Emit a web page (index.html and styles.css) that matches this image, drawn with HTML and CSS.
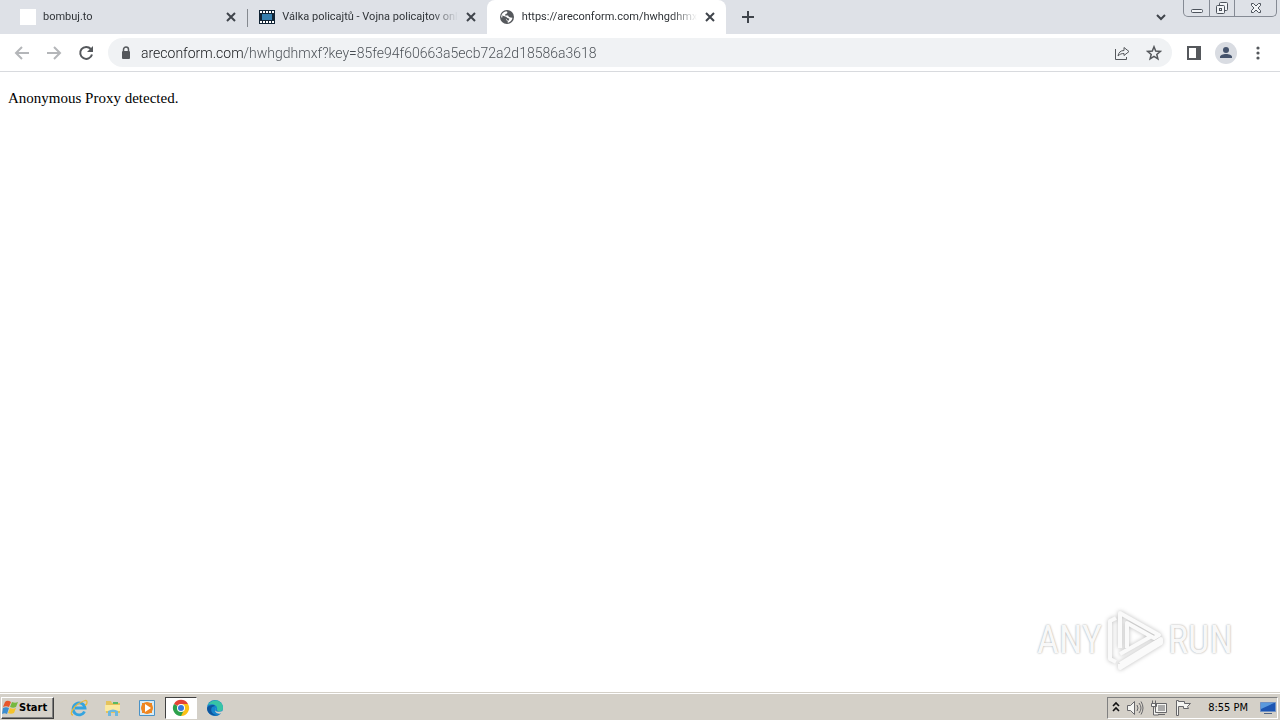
FILE: index.html
```html
<!DOCTYPE html>
<html lang="en">
<head>
<meta charset="utf-8">
<title>areconform.com</title>
<link rel="stylesheet" href="styles.css">
</head>
<body>
<header class="tabstrip">
  <div class="tabs" role="tablist">
    <div class="tab">
      <span class="favicon blank"></span>
      <button class="title" role="tab">bombuj.to</button>
      <button class="close" aria-label="Close tab"><svg width="10" height="10"><path d="M1 1l8 8M9 1l-8 8"/></svg></button>
    </div>
    <div class="tab divided">
      <svg class="favicon" viewBox="0 0 16 16"><path fill="#102334" d="M0 1h16v14H0z"/><path fill="#367fae" d="M3 5h10v6H3z"/><path stroke="#fff" stroke-width="2" stroke-dasharray="2 1" d="M1 3h14M1 13h14"/></svg>
      <button class="title" role="tab">Válka policajtů - Vojna policajtov onli</button>
      <button class="close" aria-label="Close tab"><svg width="10" height="10"><path d="M1 1l8 8M9 1l-8 8"/></svg></button>
    </div>
    <div class="tab active">
      <svg class="favicon" viewBox="0 0 16 16"><circle cx="8" cy="8" r="7" fill="#55585c"/><path fill="#fff" d="M2.200 8.500C2 5.300 4 3 7.200 2.300L8.500 3 8 4.500 6.500 5 6 6.500h3l1 1.500 1.500.5 2 .3c-.4 2.800-2.400 4.700-4.800 4.900V12l-1.500-1V9.500L4.500 8z"/><path fill="#55585c" d="M3.200 6.500l3.800 1.200L8.500 9l2 .8-1.300 2.200L7 9.800 3.500 8.500z"/></svg>
      <button class="title" role="tab" aria-selected="true">https://areconform.com/hwhgdhmxf</button>
      <button class="close" aria-label="Close tab"><svg width="10" height="10"><path d="M1 1l8 8M9 1l-8 8"/></svg></button>
    </div>
  </div>
  <button class="newtab" aria-label="New tab"><svg width="12" height="12"><path d="M6 0v12M0 6h12"/></svg></button>
  <button class="search-tabs" aria-label="Search tabs"><svg width="10" height="7"><path d="M1 1l4 4 4-4"/></svg></button>
  <div class="window-buttons">
    <button aria-label="Minimize"><svg width="14" height="14"><rect x="1.500" y="8.500" width="11" height="3" rx="1"/></svg></button>
    <button aria-label="Restore"><svg width="14" height="14"><rect x="4.500" y="1.500" width="8" height="8" rx="1"/><rect x="1.500" y="4.500" width="8" height="8" rx="1"/><rect x="4.500" y="7.500" width="2" height="2"/></svg></button>
    <button class="exit" aria-label="Close"><svg width="14" height="14"><path d="M2.500 2.500h2L7 5l2.500-2.500h2v2L9 7l2.500 2.500v2h-2L7 9l-2.500 2.500h-2v-2L5 7 2.500 4.500z"/></svg></button>
  </div>
</header>

<nav class="toolbar">
  <button class="tool faded" aria-label="Back"><svg viewBox="0 0 16 16"><path d="M15 8H2M8 2L2 8l6 6"/></svg></button>
  <button class="tool faded" aria-label="Forward"><svg viewBox="0 0 16 16"><path d="M1 8h13M8 2l6 6-6 6"/></svg></button>
  <button class="tool" aria-label="Reload"><svg viewBox="0 0 16 16"><path d="M12.800 4A6 6 0 1 0 14 9.500"/><path class="solid" d="M15 1v6H9z"/></svg></button>
  <div class="omnibox">
    <button class="lock" aria-label="Site information"><svg width="10" height="14"><rect x="1" y="5" width="8" height="8" rx="1" fill="#55585c"/><path d="M2.500 5V3.500a2.500 2.500 0 0 1 5 0V5" fill="none" stroke="#55585c" stroke-width="1.500"/></svg></button>
    <input class="url" type="text" aria-label="Address" value="areconform.com/hwhgdhmxf?key=85fe94f60663a5ecb72a2d18586a3618">
    <button class="tool thin" aria-label="Share"><svg viewBox="0 0 16 16"><path d="M1.500 4v10.500h11V12M4 11c.5-3.500 2.500-5.500 6-5.500V2.500L15 6.500l-5 4V8.500C7.500 8.500 6 9 4 11z"/></svg></button>
    <button class="tool star" aria-label="Bookmark"><svg viewBox="0 0 16 16"><path d="M8 1.800l1.700 4.300 4.600.3-3.500 3 1.100 4.400L8 11.400l-3.900 2.400 1.100-4.400-3.500-3 4.600-.3z"/></svg></button>
  </div>
  <button class="tool" aria-label="Side panel"><svg viewBox="0 0 16 16"><path class="solid" fill-rule="evenodd" d="M1 1h14v14H1zM3 3v10h7V3z"/></svg></button>
  <button class="tool avatar" aria-label="Profile"><svg viewBox="0 0 22 22"><circle cx="11" cy="11" r="11" fill="#d9dce2"/><circle cx="11" cy="8" r="3" fill="#45536c"/><path fill="#45536c" d="M5 16v-1c0-4 12-4 12 0v1z"/></svg></button>
  <button class="tool" aria-label="Menu"><svg viewBox="0 0 16 16"><g class="solid"><circle cx="8" cy="3" r="1.600"/><circle cx="8" cy="8" r="1.600"/><circle cx="8" cy="13" r="1.600"/></g></svg></button>
</nav>

<main class="page">
  <p>Anonymous Proxy detected.</p>
  <div class="watermark">
    <span>ANY</span>
    <svg width="58" height="64" viewBox="0 0 58 64"><path d="M14 40V5l39 22-5 3-27-15v25M10 10l-6 3v38l6 3M14 56v4l41-25v-4L14 56M14 46l30-17"/></svg>
    <span>RUN</span>
  </div>
</main>

<footer class="taskbar">
  <button class="start"><svg width="17" height="16" viewBox="0 0 17 16"><path fill="#e9562b" d="M3 2c2-2 4-1 6 0L7 7c-2-1-4-1-6 0z"/><path fill="#76b83f" d="M10 2c2 1 4 1 6 0l-2 5c-2 1-4 1-6 0z"/><path fill="#3d8ed0" d="M1 8c2-1 4-1 6 0l-2 6c-2-1-3-1-5 0z"/><path fill="#f5c32c" d="M8 8c2 1 4 1 6 0l-2 5c-2 1-4 1-6 0z"/></svg>Start</button>
  <div class="launchers">
    <button class="app" aria-label="Internet Explorer"><svg viewBox="0 0 18 18"><path d="M14.500 12.500A6 6 0 1 1 15 9H5" fill="none" stroke="#35a4df" stroke-width="2.800"/><path d="M3 16C-1 16 3 8 8 5s9-5 9-2-2 3-2 3" fill="none" stroke="#e8b83a" stroke-width="1.300"/></svg></button>
    <button class="app" aria-label="File Explorer"><svg viewBox="0 0 18 18"><path fill="#e5c35b" d="M2 2h5l1 2h8v10H2z"/><path fill="#fbe9a0" d="M1 6h15v6H1z"/><path fill="#58b963" d="M9 3h5v2H9z"/><path fill="#6db8df" d="M4 17v-5q5-3 10 0v5h-3v-4H7v4z"/></svg></button>
    <button class="app" aria-label="Media Player"><svg viewBox="0 0 18 18"><path fill="#d7ebf5" stroke="#4a92c6" d="M1.500 1.500h15v15h-15z"/><path fill="#ef8620" d="M4 4h10v10H4z"/><circle cx="9" cy="9" r="6" fill="#ef8620"/><path fill="#fff" d="M7 5l6 4-6 4z"/></svg></button>
    <button class="app running" aria-label="Chrome"><svg viewBox="0 0 18 18"><path fill="#e54335" d="M9 9L2 5a8 8 0 0 1 14 0z"/><path fill="#fbc116" d="M9 9V5h7a8 8 0 0 1-7 12z"/><path fill="#2da14c" d="M2 5a8 8 0 0 0 7 12l3-6-3-2z"/><circle cx="9" cy="9" r="4" fill="#fff"/><circle cx="9" cy="9" r="3" fill="#3979dc"/></svg></button>
    <button class="app" aria-label="Edge"><svg viewBox="0 0 18 18"><circle cx="9" cy="9" r="8" fill="#1685ce"/><path fill="#38c5a5" d="M2 6C5-1 17 0 17 9c0 4-5 4-6 2 1-5-4-7-9-5z"/><path fill="#0f559d" d="M6 8c-3 5 3 10 8 7-3 3-13 2-13-6 1-3 7-4 8-2z"/><path fill="#d6d2c9" d="M10 9c-3 3 2 5 7 3l-1 2c-4 2-9-1-6-5z"/></svg></button>
  </div>
  <div class="tray">
    <svg width="8" height="14" viewBox="0 0 8 14"><path d="M1 5l3-3 3 3M1 10l3-3 3 3" fill="none" stroke="#111" stroke-width="1.600"/></svg>
    <svg width="18" height="18" viewBox="0 0 18 18" class="glyph"><path d="M1.500 6.500h3l4-4v13l-4-4h-3z"/><path fill="none" d="M11 6q2 3 0 6M13 4q4 5 0 10M15 2.500q4 6.500 0 13"/></svg>
    <svg width="18" height="18" viewBox="0 0 18 18" class="glyph"><path d="M5.500 4.500h11v9h-11zM8 15.500h7M2.500 1.500v3M5.500 1.500v3M1.500 4.500h5v3h-5zM3.500 8v8h5"/><path class="shade" d="M8 6h7v6H8z"/></svg>
    <svg width="18" height="18" viewBox="0 0 18 18" class="glyph"><path d="M2.500 16.500v-15h2v1h6v2h6l-3 3 1 2h-5v-2h-5v9z"/></svg>
    <time>8:55 PM</time>
    <svg width="17" height="16" viewBox="0 0 17 16"><path fill="#1d55b2" stroke="#6f91c5" d="M1.500 2.500h15v9h-15z"/><path fill="#5a99dd" d="M2 3h13L2 9z"/><path fill="#4d6385" d="M5 13h8v1H5z"/></svg>
  </div>
</footer>
</body>
</html>
```
FILE: styles.css
```css
* { box-sizing: border-box; }
body {
  margin: 0;
  min-height: 100vh;
  display: flex;
  flex-direction: column;
  background: #fff;
  font-family: "DejaVu Sans Condensed", "DejaVu Sans", sans-serif;
  font-size: 11px;
  color: #303438;
}
button { border: 0; padding: 0; background: none; font: inherit; color: inherit; }
svg { display: block; flex: none; }

.tabstrip { display: flex; height: 34px; background: #dee1e7; }
.tabs { display: flex; flex: 0 1 726px; min-width: 0; padding-left: 8px; }
.tab {
  flex: 1;
  min-width: 0;
  display: flex;
  align-items: center;
  padding: 0 11px 0 12px;
}
.divided { background: linear-gradient(#85898f, #85898f) 0 9px / 1px 18px no-repeat; }
.active { background: #fff; border-radius: 8px 8px 0 0; }
.favicon { width: 16px; height: 16px; margin-right: 7px; flex: none; }
.blank { background: #fff; }
.title {
  flex: 1;
  min-width: 0;
  overflow: hidden;
  white-space: nowrap;
  text-align: left;
  font-family: Roboto, sans-serif;
  line-height: 16px;
  mask-image: linear-gradient(to right, #000 calc(100% - 26px), transparent);
}
.close { margin-left: 8px; }
.close svg, .newtab svg, .search-tabs svg { fill: none; stroke: #3f444b; stroke-width: 2; }
.newtab { margin-left: 16px; }
.search-tabs { margin-left: auto; }
.window-buttons {
  display: flex;
  height: 17px;
  margin: 0 3px 0 17px;
  border: 1px solid #858a94;
  border-top: 0;
  border-radius: 0 0 5px 5px;
}
.window-buttons button { width: 25px; display: grid; place-items: center; }
.window-buttons button + button { border-left: 1px solid #858a94; }
.window-buttons .exit { width: 42px; }
.window-buttons svg { fill: #f2f4f7; stroke: #4d535c; }

.toolbar {
  display: flex;
  align-items: center;
  height: 38px;
  padding: 0 14px;
  gap: 16px;
  border-bottom: 1px solid #d8dade;
}
.tool svg { width: 16px; height: 16px; fill: none; stroke: #55585c; stroke-width: 2; }
.tool .solid { fill: #55585c; stroke: none; }
.tool.faded svg { stroke: #b4b6b9; }
.tool.thin svg { stroke-width: 1; }
.tool.star svg { stroke-width: 1.5; }
.tool.avatar svg { width: 22px; height: 22px; stroke: none; }
.toolbar > .avatar { margin: 0 -3px; }
.omnibox {
  flex: 1;
  min-width: 0;
  display: flex;
  align-items: center;
  height: 29px;
  margin: 0 -2px;
  padding: 0 10px 0 13px;
  gap: 16px;
  border-radius: 15px;
  background: #f0f2f4;
}
.url {
  flex: 1;
  min-width: 0;
  margin-left: -6px;
  padding: 0;
  border: 0;
  outline: 0;
  font: 300 14px Roboto, sans-serif;
  line-height: 24px;
  color: transparent;
  background: linear-gradient(to right, #17191c 102px, #474c52 102px);
  background-clip: text;
}

.page { flex: 1; position: relative; padding: 17px 8px; }
.page p { margin: 0; font: 15px "Liberation Serif", serif; line-height: 18px; color: #000; }
.watermark {
  position: absolute;
  right: 47px;
  bottom: 20px;
  display: flex;
  align-items: center;
  gap: 4px;
  font: 38px "Liberation Sans Narrow", "Roboto Condensed", sans-serif;
  color: #f8f8f8;
  text-shadow: 0 0 2px #999;
}
.watermark svg { fill: none; stroke: #fafafa; stroke-width: 4; stroke-linejoin: round; filter: drop-shadow(0 0 2px #bbb); }

.taskbar {
  display: flex;
  align-items: center;
  height: 28px;
  padding: 2px 2px 0 1px;
  border-top: 1px solid #d4d0c8;
  box-shadow: inset 0 1px #fff;
  background: #d4d0c8;
  color: #000;
}
.start {
  display: flex;
  align-items: center;
  width: 53px;
  height: 22px;
  font-weight: bold;
  border: 1px solid;
  border-color: #fff #404040 #404040 #fff;
  box-shadow: inset -1px -1px #808080;
}
.launchers { display: flex; gap: 2px; margin-left: 9px; }
.app { width: 32px; height: 22px; display: grid; place-items: center; }
.app svg { width: 18px; height: 18px; }
.running { background: #fff; border: 1px solid; border-color: #404040 #fff #fff #404040; }
.tray {
  display: flex;
  align-items: center;
  gap: 6px;
  height: 22px;
  margin-left: auto;
  padding: 0 1px 0 4px;
  border: 1px solid;
  border-color: #808080 #fff #fff #808080;
}
.tray time { margin: 0 5px 0 10px; }
.glyph { fill: #f5f5f2; stroke: #67676a; }
.glyph .shade { fill: #aaa; stroke: none; }
```
